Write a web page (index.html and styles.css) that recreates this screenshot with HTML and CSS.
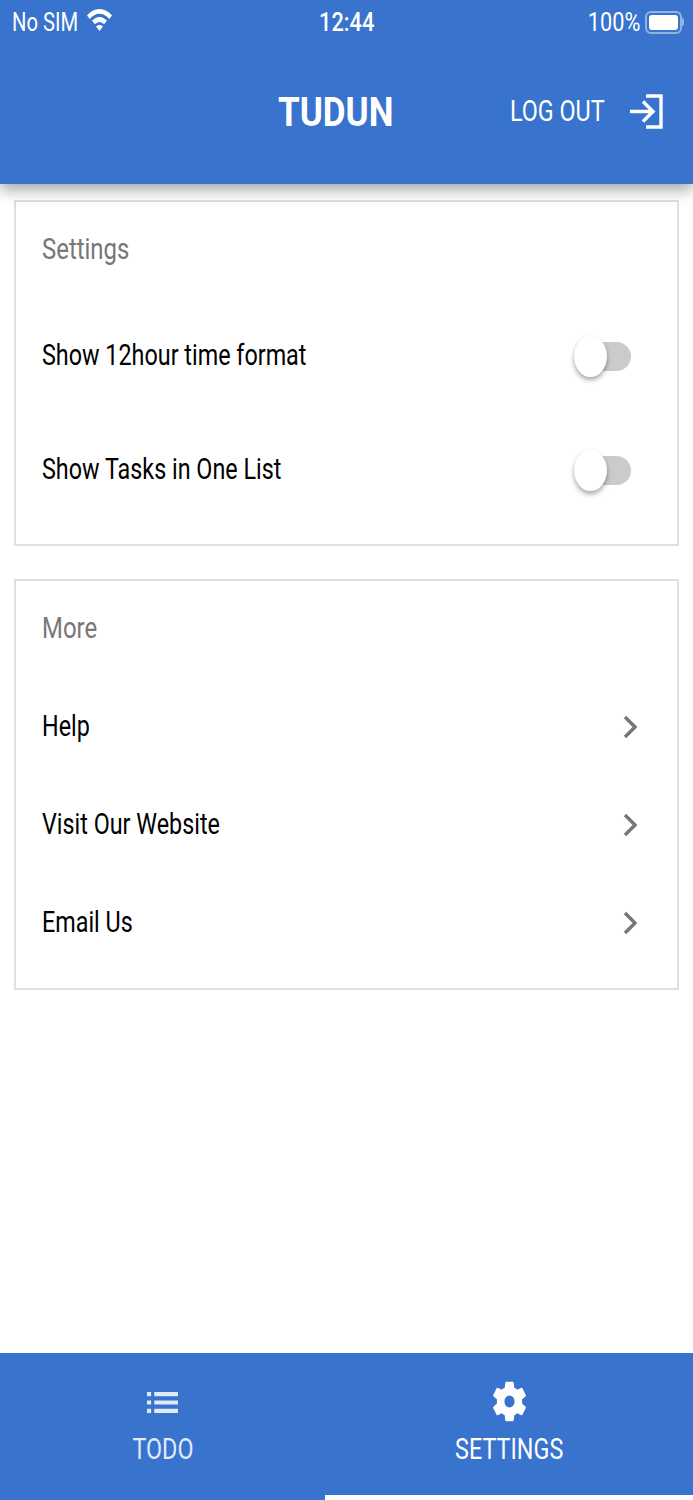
FILE: index.html
```html
<!DOCTYPE html>
<html>
<head>
    <meta charset="UTF-8">
    <meta name="viewport" content="width=device-width, initial-scale=1.0">
    <title>Tudun Settings</title>
    <link rel="stylesheet" href="styles.css">
</head>
<body>
    <div class="app">
        <div class="header">
            <div class="status-bar">
                <div class="status-left">
                    <span class="status-text">No SIM</span>
                    <svg class="wifi" viewBox="0 0 25 22"><path d="M12.5 0C7.6 0 3.4 2.4 0 6.500l2.800 3.500C5.500 6.800 8.700 4.800 12.500 4.800s7 2 9.700 5.200L25 6.500C21.600 2.400 17.400 0 12.500 0zM12.500 8C9.800 8 7.400 9.400 5 11.800l2.900 3.500c1.400-1.500 2.900-2.400 4.600-2.400s3.200.9 4.600 2.400l2.900-3.500C17.600 9.400 15.200 8 12.500 8zM12.500 16c-1.400 0-2.500.6-3.500 1.600l3.500 4.400 3.500-4.400c-1-1-2.100-1.600-3.500-1.600z"/></svg>
                </div>
                <span class="status-text status-time">12:44</span>
                <div class="status-right">
                    <span class="status-text">100%</span>
                    <div class="battery"><div class="battery-fill"></div></div>
                    <div class="battery-tip"></div>
                </div>
            </div>
            <div class="nav-bar">
                <h1 class="title">TUDUN</h1>
                <div class="logout">
                    <span class="logout-text">LOG OUT</span>
                    <svg class="logout-icon" viewBox="0 0 34 37"><path d="M17 3h15v31H17M1 18.500h22M14 8.500l10 10-10 10" fill="none" stroke="#fff" stroke-width="3.400"/></svg>
                </div>
            </div>
        </div>

        <div class="content">
            <div class="card card-settings">
                <div class="card-title"><span>Settings</span></div>
                <div class="row row-toggle">
                    <span>Show 12hour time format</span>
                    <div class="toggle"><div class="knob"></div></div>
                </div>
                <div class="row row-toggle">
                    <span>Show Tasks in One List</span>
                    <div class="toggle"><div class="knob"></div></div>
                </div>
            </div>

            <div class="card card-more">
                <div class="card-title"><span>More</span></div>
                <div class="row row-link">
                    <span>Help</span>
                    <svg class="chevron" viewBox="0 0 14 24"><path d="M2 2l10 10L2 22" fill="none" stroke="#777" stroke-width="3.400"/></svg>
                </div>
                <div class="row row-link">
                    <span>Visit Our Website</span>
                    <svg class="chevron" viewBox="0 0 14 24"><path d="M2 2l10 10L2 22" fill="none" stroke="#777" stroke-width="3.400"/></svg>
                </div>
                <div class="row row-link">
                    <span>Email Us</span>
                    <svg class="chevron" viewBox="0 0 14 24"><path d="M2 2l10 10L2 22" fill="none" stroke="#777" stroke-width="3.400"/></svg>
                </div>
            </div>
        </div>

        <div class="tabs">
            <div class="tab tab-todo">
                <svg class="tab-icon list-icon" viewBox="0 0 30 20" preserveAspectRatio="none"><path d="M0 0h4v4H0zM7 0h23v4H7zM0 8h4v4H0zM7 8h23v4H7zM0 16h4v4H0zM7 16h23v4H7z"/></svg>
                <span class="tab-label">TODO</span>
            </div>
            <div class="tab tab-active">
                <svg class="tab-icon gear-icon" viewBox="2.600 2 18.800 20" preserveAspectRatio="none"><path fill-rule="evenodd" d="M19.140 12.940c.04-.3.06-.61.06-.94 0-.32-.02-.64-.07-.94l2.030-1.580a.49.49 0 0 0 .12-.61l-1.920-3.320a.488.488 0 0 0-.59-.22l-2.390.96c-.5-.38-1.030-.7-1.620-.94l-.36-2.540a.484.484 0 0 0-.48-.41h-3.840c-.24 0-.43.17-.47.41l-.36 2.540c-.59.24-1.130.57-1.620.94l-2.390-.96c-.22-.08-.47 0-.59.22L2.740 8.870c-.12.21-.08.47.12.61l2.030 1.580c-.05.3-.09.63-.09.94s.02.64.07.94l-2.030 1.580a.49.49 0 0 0-.12.61l1.920 3.320c.12.22.37.29.59.22l2.390-.96c.5.38 1.030.7 1.620.94l.36 2.540c.05.24.24.41.48.41h3.840c.24 0 .44-.17.47-.41l.36-2.540c.59-.24 1.130-.56 1.620-.94l2.390.96c.22.08.47 0 .59-.22l1.920-3.320c.12-.22.07-.47-.12-.61l-2.010-1.580zM12 14.900a2.900 2.900 0 1 1 0-5.800 2.900 2.900 0 0 1 0 5.800z"/></svg>
                <span class="tab-label">SETTINGS</span>
            </div>
        </div>
    </div>
</body>
</html>
```

FILE: styles.css
```css
* {
    box-sizing: border-box;
}

html, body {
    margin: 0;
    padding: 0;
    background: #fff;
}

.app {
    width: 693px;
    height: 1500px;
    display: flex;
    flex-direction: column;
    font-family: Roboto, "Liberation Sans", sans-serif;
    color: #000;
    overflow: hidden;
}

/* the whole screenshot is squeezed sideways, so text gets the same squeeze */
.status-text,
.title,
.logout-text,
.card-title span,
.row span,
.tab-label {
    display: inline-block;
    white-space: nowrap;
    transform: scaleX(0.805);
}

.header {
    height: 184px;
    background-color: #3873cd;
    color: #fff;
    box-shadow: 0 6px 14px rgba(0, 0, 0, 0.35);
    position: relative;
    z-index: 1;
}

.status-bar {
    height: 44px;
    padding: 0 9px 0 12px;
    display: grid;
    grid-template-columns: 1fr auto 1fr;
    align-items: center;
}

.status-text {
    font-size: 25px;
    transform: scaleX(0.81);
    transform-origin: left center;
}

.status-left {
    display: flex;
    align-items: center;
}

.status-left .status-text {
    width: 75px;
}

.wifi {
    width: 25px;
    height: 22px;
    fill: #fff;
    margin-top: -4px;
}

.status-time {
    transform: scaleX(0.87);
    transform-origin: center;
    font-weight: 500;
    margin-left: -1px;
    margin-right: 1px;
}

.status-right {
    display: flex;
    align-items: center;
    justify-content: flex-end;
}

.status-right .status-text {
    transform: scaleX(0.87);
    transform-origin: right center;
    margin-right: 5px;
}

.battery {
    width: 37px;
    height: 23px;
    border: 2px solid rgba(255, 255, 255, 0.45);
    border-radius: 6px;
    padding: 2px;
}

.battery-fill {
    height: 100%;
    background-color: #fff;
    border-radius: 3px;
}

.battery-tip {
    width: 2px;
    height: 8px;
    background-color: rgba(255, 255, 255, 0.45);
    border-radius: 0 2px 2px 0;
}

.nav-bar {
    height: 134px;
    padding: 0 29px 0 0;
    display: flex;
    align-items: center;
    justify-content: flex-end;
}

.title {
    margin: 2px 74px 0 0;
    font-size: 41px;
    font-weight: 700;
    transform: scaleX(0.855);
    transform-origin: left center;
}

.logout {
    display: flex;
    align-items: center;
}

.logout-text {
    font-size: 29px;
    transform-origin: right center;
    margin-right: 23px;
}

.logout-icon {
    width: 36px;
    height: 37px;
}

.content {
    flex: 1;
    padding: 16px 14px 0;
    display: flex;
    flex-direction: column;
    gap: 33px;
}

.card {
    border: 2px solid #dfdfdf;
    padding: 0 40px 0 26px;
}

.card-settings {
    height: 346px;
}

.card-more {
    height: 411px;
}

.card-title {
    height: 96px;
    padding-bottom: 2px;
    display: flex;
    align-items: center;
    color: #777;
    font-size: 29px;
}

.card-title span,
.row span {
    transform-origin: left center;
}

.card-title span {
    transform: scaleX(0.825);
}

.row {
    display: flex;
    align-items: center;
    justify-content: space-between;
    font-size: 29px;
}

.row-toggle {
    height: 114px;
}

.row-link {
    height: 98px;
}

.toggle {
    width: 57px;
    height: 29px;
    background-color: #cbcbcb;
    border-radius: 15px;
    margin: 2px 6px 0 0;
    position: relative;
}

.knob {
    width: 33px;
    height: 41px;
    background-color: #fff;
    border-radius: 50%;
    box-shadow: 0 3px 5px rgba(0, 0, 0, 0.35);
    position: absolute;
    left: 0;
    top: -6px;
}

.chevron {
    width: 14px;
    height: 24px;
    margin-top: 2px;
}

.tabs {
    height: 147px;
    background-color: #3873cd;
    display: grid;
    grid-template-columns: 325px 1fr;
    color: #fff;
}

.tab {
    display: flex;
    flex-direction: column;
    align-items: center;
    padding-top: 28px;
    opacity: 0.85;
}

.tab-active {
    opacity: 1;
    border-bottom: 5px solid #fff;
}

.tab-icon {
    fill: #fff;
    display: block;
}

.list-icon {
    width: 31px;
    height: 21px;
    margin: 11px 0 7px;
}

.gear-icon {
    width: 33px;
    height: 41px;
    margin-bottom: -2px;
}

.tab-label {
    font-size: 29px;
    line-height: 38px;
    margin-top: 10px;
    transform-origin: center;
}
```
